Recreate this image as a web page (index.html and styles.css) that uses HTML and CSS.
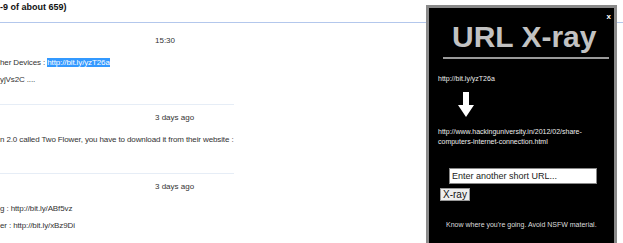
FILE: index.html
```html
<!DOCTYPE html>
<html>
<head>
    <title>URL X-ray</title>
    <meta charset="UTF-8">
    <link rel="stylesheet" href="styles.css">
</head>
<body>
<div class="page">
    <div class="results-head">-9 of about 659)</div>

    <div class="msg">
        <div class="time">15:30</div>
        <p>her Devices : <span class="selected">http://bit.ly/yzT26a</span></p>
        <p>yjVs2C ....</p>
    </div>
    <div class="msg">
        <div class="time">3 days ago</div>
        <p>n 2.0 called Two Flower, you have to download it from their website :</p>
    </div>
    <div class="msg last">
        <div class="time">3 days ago</div>
        <p>g : http://bit.ly/ABf5vz</p>
        <p>er : http://bit.ly/xBz9Di</p>
    </div>

    <div class="xray">
        <span class="close">x</span>
        <h1 class="logo">URL X-ray</h1>
        <div class="rule"></div>
        <div class="short">http://bit.ly/yzT26a</div>
        <svg class="arrow" width="16" height="25" viewBox="0 0 16 25">
            <polygon points="5,0 11,0 11,13 16,13 8,25 0,13 5,13" fill="#fff"/>
        </svg>
        <div class="long">http://www.hackinguniversity.in/2012/02/share-<br>computers-internet-connection.html</div>
        <form class="again">
            <input type="text" value="Enter another short URL...">
            <button type="button">X-ray</button>
        </form>
        <div class="note">Know where you're going. Avoid NSFW material.</div>
    </div>
</div>
</body>
</html>
```

FILE: styles.css
```css
body {
    margin: 0;
    background-color: #fff;
    font-family: "Liberation Sans", Arial, sans-serif;
}
.page {
    position: relative;
    width: 623px;
    height: 243px;
    overflow: hidden;
}

.results-head {
    height: 22px;
    line-height: 14px;
    font-size: 9px;
    font-weight: bold;
    color: #111;
    border-bottom: 1px solid #b3c7ec;
}

.msg {
    width: 234px;
    padding: 13px 0 0;
    border-bottom: 1px solid #e6edf6;
    font-size: 8px;
    color: #333;
    white-space: nowrap;
}
.msg.last {
    border-bottom: none;
}
.time {
    margin-left: 155px;
    line-height: 10px;
}
.msg p {
    margin: 12px 0 0;
    line-height: 10px;
    letter-spacing: -0.12px;
}
.msg p + p {
    margin-top: 7px;
}
.msg:nth-child(2) {
    height: 68px;
}
.msg:nth-child(3) {
    height: 60px;
    padding-top: 8px;
}
.msg:nth-child(4) {
    padding-top: 8px;
}
.selected {
    background-color: #3399ff;
    color: #fff;
}

/* overlay panel */
.xray {
    position: absolute;
    left: 426px;
    top: 5px;
    width: 185px;
    height: 260px;
    background-color: #000;
    border: 3px solid #8a8a8a;
    color: #eee;
    font-size: 7px;
}
.close {
    position: absolute;
    right: 3px;
    top: 4px;
    font-size: 8px;
    font-weight: bold;
    color: #fff;
}
.logo {
    margin: 13px 0 0 23px;
    font-size: 30px;
    line-height: 31px;
    font-weight: bold;
    color: #c2c2c2;
    white-space: nowrap;
}
.rule {
    height: 2px;
    margin: 5px 5px 0 14px;
    background-color: #9a9a9a;
}
.short {
    margin: 15px 0 0 9px;
    line-height: 10px;
}
.arrow {
    display: block;
    margin: 8px 0 0 29px;
}
.long {
    margin: 10px 0 0 9px;
    line-height: 10px;
}
.again {
    margin: 21px 0 0 11px;
}
.again input {
    display: block;
    box-sizing: border-box;
    width: 148px;
    height: 16px;
    margin: 0 0 4px 9px;
    padding: 0 2px;
    border: 1px solid #888;
    font-family: "Liberation Sans", Arial, sans-serif;
    font-size: 9px;
    color: #222;
}
.again button {
    display: block;
    box-sizing: border-box;
    height: 13px;
    padding: 0 2px;
    border: 1px solid #999;
    background-color: #eee;
    font-family: "Liberation Sans", Arial, sans-serif;
    font-size: 10px;
    line-height: 11px;
    color: #111;
}
.note {
    margin: 20px 0 0 17px;
    font-size: 7px;
    color: #ddd;
}
```
